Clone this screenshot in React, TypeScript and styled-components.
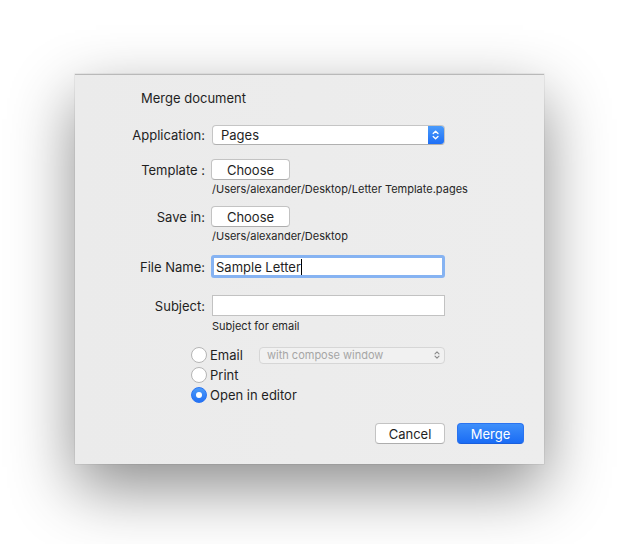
import React from "react";
import styled, { createGlobalStyle } from "styled-components";

const Global = createGlobalStyle`
  html, body { margin: 0; padding: 0; background: #ffffff; }
  body { font-family: Inter, "Liberation Sans", sans-serif; color: #1f1f1f; }
  * { box-sizing: border-box; }
`;

const Canvas = styled.div`
  width: 623px;
  height: 544px;
  padding: 74px 0 0 75px;
  overflow: hidden;
`;

const Dialog = styled.div`
  width: 469px;
  height: 390px;
  background: linear-gradient(90deg, #ebebeb 0%, #ededed 100%);
  border-top: 1px solid #b9b9b9;
  box-shadow: 0 24px 60px rgba(0, 0, 0, 0.45), 0 0 0 0.5px rgba(0, 0, 0, 0.1);
  display: flex;
  flex-direction: column;
  padding-top: 15px;
`;

const Title = styled.div`
  font-size: 13px;
  line-height: 16px;
  margin-left: 66px;
`;

const Row = styled.div<{ $mt: number }>`
  display: grid;
  grid-template-columns: 130px 1fr;
  column-gap: 6px;
  align-items: center;
  margin-top: ${(p) => p.$mt}px;
  height: 20px;
`;

const Label = styled.div`
  font-size: 13px;
  text-align: right;
  white-space: nowrap;
`;

const Hint = styled.div<{ $mt: number }>`
  margin-top: ${(p) => p.$mt}px;
  margin-left: 137px;
  font-size: 11px;
  line-height: 13px;
  color: #262626;
`;

const Popup = styled.div`
  width: 233px;
  height: 20px;
  margin-left: 1px;
  display: flex;
  background: #fff;
  border: 1px solid #c5c5c5;
  border-bottom-color: #b0b0b0;
  border-radius: 4px;
  overflow: hidden;
`;

const PopupText = styled.div`
  flex: 1;
  font-size: 13px;
  line-height: 18px;
  padding-left: 8px;
`;

const Stepper = styled.div`
  width: 16px;
  background: linear-gradient(180deg, #4a9bfb 0%, #1e6ff6 100%);
  display: flex;
  align-items: center;
  justify-content: center;
`;

const PushButton = styled.button<{ $w: number; $primary?: boolean }>`
  width: ${(p) => p.$w}px;
  height: 21px;
  font-family: inherit;
  font-size: 13px;
  padding: 0;
  border-radius: 4px;
  border: 1px solid ${(p) => (p.$primary ? "#2a73f0" : "#c3c3c3")};
  border-bottom-color: ${(p) => (p.$primary ? "#1a5fdc" : "#adadad")};
  background: ${(p) =>
    p.$primary ? "linear-gradient(180deg, #3e8ffa 0%, #1a6cf5 100%)" : "#ffffff"};
  color: ${(p) => (p.$primary ? "#ffffff" : "#1f1f1f")};
`;

const TextField = styled.div<{ $focus?: boolean }>`
  width: ${(p) => (p.$focus ? 234 : 233)}px;
  height: ${(p) => (p.$focus ? 23 : 21)}px;
  margin-left: ${(p) => (p.$focus ? 0 : 1)}px;
  background: #fff;
  border: ${(p) => (p.$focus ? "3px solid #86b3f2" : "1px solid #c2c2c2")};
  border-radius: ${(p) => (p.$focus ? 3 : 0)}px;
  font-size: 13px;
  display: flex;
  align-items: center;
  padding-left: ${(p) => (p.$focus ? 2 : 4)}px;
`;

const Caret = styled.span`
  display: inline-block;
  width: 1px;
  height: 16px;
  background: #000;
`;

const Radios = styled.div`
  margin-top: 13px;
  margin-left: 116px;
  display: flex;
  flex-direction: column;
  gap: 2px;
`;

const RadioRow = styled.div`
  display: flex;
  align-items: center;
  height: 18px;
  font-size: 13px;
`;

const RadioCircle = styled.span<{ $on?: boolean }>`
  width: 16px;
  height: 16px;
  border-radius: 50%;
  border: 1px solid ${(p) => (p.$on ? "#2a74f3" : "#b5b5b5")};
  background: ${(p) => (p.$on ? "linear-gradient(180deg,#4b9bfa,#2371f4)" : "#fff")};
  display: flex;
  align-items: center;
  justify-content: center;
  margin-right: 3px;
  &::after {
    content: "";
    display: ${(p) => (p.$on ? "block" : "none")};
    width: 6px;
    height: 6px;
    border-radius: 50%;
    background: #fff;
  }
`;

const RadioLabel = styled.span`
  width: 49px;
`;

const DisabledPopup = styled.div`
  width: 186px;
  height: 17px;
  border: 1px solid #d6d6d6;
  border-radius: 4px;
  background: #f1f1f1;
  color: #a6a6a6;
  font-size: 11px;
  display: flex;
  align-items: center;
  justify-content: space-between;
  padding: 0 4px 0 7px;
`;

const Footer = styled.div`
  margin-top: 19px;
  display: flex;
  justify-content: flex-end;
  gap: 12px;
  padding-right: 20px;
`;

const Chevrons = ({ color, size }: { color: string; size: number }) => (
  <svg width={size * 0.6} height={size} viewBox="0 0 6 10" fill="none">
    <path d="M1 3.8 L3 1.8 L5 3.8" stroke={color} strokeWidth="1.1" strokeLinecap="round" strokeLinejoin="round" />
    <path d="M1 6.2 L3 8.2 L5 6.2" stroke={color} strokeWidth="1.1" strokeLinecap="round" strokeLinejoin="round" />
  </svg>
);

export default function App() {
  return (
    <>
      <Global />
      <Canvas>
        <Dialog>
          <Title>Merge document</Title>
          <Row $mt={19}>
            <Label>Application:</Label>
            <Popup>
              <PopupText>Pages</PopupText>
              <Stepper>
                <Chevrons color="#ffffff" size={12} />
              </Stepper>
            </Popup>
          </Row>
          <Row $mt={14}>
            <Label>Template :</Label>
            <PushButton $w={79}>Choose</PushButton>
          </Row>
          <Hint $mt={4}>/Users/alexander/Desktop/Letter Template.pages</Hint>
          <Row $mt={10}>
            <Label>Save in:</Label>
            <PushButton $w={79}>Choose</PushButton>
          </Row>
          <Hint $mt={4}>/Users/alexander/Desktop</Hint>
          <Row $mt={12}>
            <Label>File Name:</Label>
            <TextField $focus>
              Sample Letter<Caret />
            </TextField>
          </Row>
          <Row $mt={20}>
            <Label>Subject:</Label>
            <TextField />
          </Row>
          <Hint $mt={5}>Subject for email</Hint>
          <Radios>
            <RadioRow>
              <RadioCircle />
              <RadioLabel>Email</RadioLabel>
              <DisabledPopup>
                with compose window
                <Chevrons color="#8a8a8a" size={10} />
              </DisabledPopup>
            </RadioRow>
            <RadioRow>
              <RadioCircle />
              Print
            </RadioRow>
            <RadioRow>
              <RadioCircle $on />
              Open in editor
            </RadioRow>
          </Radios>
          <Footer>
            <PushButton $w={70}>Cancel</PushButton>
            <PushButton $w={67} $primary>
              Merge
            </PushButton>
          </Footer>
        </Dialog>
      </Canvas>
    </>
  );
}
